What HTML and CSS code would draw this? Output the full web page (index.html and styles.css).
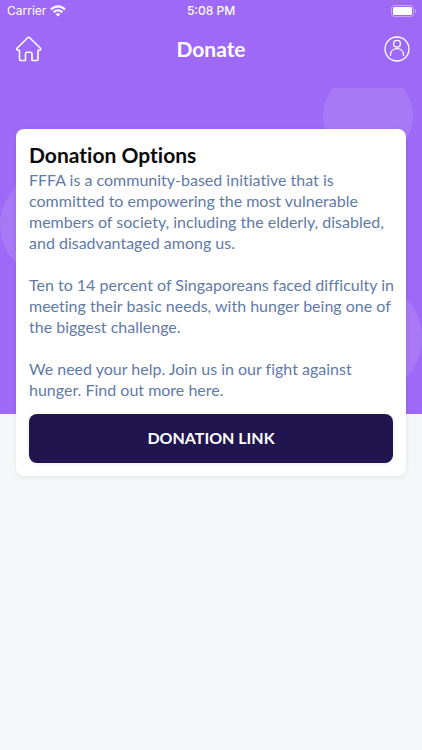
FILE: index.html
```html
<!DOCTYPE html>
<html lang="en">
<head>
<meta charset="utf-8">
<meta name="viewport" content="width=device-width, initial-scale=1">
<title>Donate</title>
<link rel="stylesheet" href="styles.css">
</head>
<body>
<header class="header">
  <div class="status">
    <div class="carrier">
      <span>Carrier</span>
      <svg width="16" height="12" viewBox="0 0 16 12" fill="none" stroke="#fff" stroke-width="2.2" aria-hidden="true">
        <path d="M1 4.600C5 .3 11 .3 15 4.600"/>
        <path d="M3.700 7.200c2.500-2.500 6.100-2.500 8.600 0"/>
        <path d="M8 11.500 5.700 9.200c1.300-1.200 3.300-1.200 4.600 0z" fill="#fff" stroke="none"/>
      </svg>
    </div>
    <span class="time">5:08 PM</span>
    <svg class="battery" width="25" height="12" viewBox="0 0 25 12" aria-hidden="true">
      <rect x=".5" y=".5" width="22" height="11" rx="3" fill="none" stroke="#fff" stroke-opacity=".4"/>
      <rect x="2" y="2" width="19" height="8" rx="1.5" fill="#fff"/>
      <path d="M24 4v4c1.200-.6 1.200-3.400 0-4z" fill="#fff" fill-opacity=".6"/>
    </svg>
  </div>
  <nav class="nav">
    <a class="icon" href="#home" aria-label="Home">
      <svg width="26" height="26" viewBox="0 0 26 26" fill="none" stroke="#fff" stroke-width="1.600" stroke-linejoin="round" aria-hidden="true">
        <path d="M3.500 14.300v9q0 1.200 1.200 1.200h4.800v-6.300q0-2 2-2h2.500q2 0 2 2v6.300h4.800q1.200 0 1.200-1.200v-9h1.500q2-.4.700-2.300L13.700 1.700q-1-.9-2 0L1.300 12q-1.300 1.900.700 2.300z"/>
      </svg>
    </a>
    <h1 class="title">Donate</h1>
    <a class="icon profile" href="#profile" aria-label="Profile">
      <svg width="26" height="26" viewBox="0 0 26 26" fill="none" stroke="#fff" stroke-width="1.300" stroke-linecap="round" aria-hidden="true">
        <circle cx="13" cy="13" r="12"/>
        <circle cx="13" cy="7.700" r="3.400"/>
        <path d="M6.500 19.500v-.700c0-8.200 13-8.200 13 0v.700"/>
      </svg>
    </a>
  </nav>
</header>
<main class="main">
  <div class="backdrop" aria-hidden="true">
    <span class="bubble bubble-top"></span>
    <span class="bubble bubble-left"></span>
    <span class="bubble bubble-right"></span>
  </div>
  <section class="card">
    <h2 class="heading">Donation Options</h2>
    <div class="copy">
      <p>FFFA is a community-based initiative that is committed to empowering the most vulnerable members of society, including the elderly, disabled, and disadvantaged among us.</p>
      <p>Ten to 14 percent of Singaporeans faced difficulty in meeting their basic needs, with hunger being one of the biggest challenge.</p>
      <p>We need your help. Join us in our fight against hunger. Find out more here.</p>
    </div>
    <button class="donate" type="button">DONATION LINK</button>
  </section>
</main>
</body>
</html>
```
FILE: styles.css
```css
* {
  box-sizing: border-box;
}

body {
  margin: 0;
  background: #f5f6f8;
  font-family: Lato, "Liberation Sans", sans-serif;
  font-variant-ligatures: none;
}

.header {
  height: 88px;
  background: #9e69f6;
  color: #fff;
}

.status,
.nav {
  display: grid;
  grid-template-columns: 1fr auto 1fr;
  align-items: center;
}

.status {
  height: 22px;
  padding: 0 6px;
  font: 12px/22px Inter, sans-serif;
}

.carrier {
  display: flex;
  align-items: center;
  gap: 4px;
  padding-left: 1px;
}

.time {
  font-weight: 500;
}

.battery {
  justify-self: end;
}

.nav {
  height: 54px;
  padding: 0 12px;
}

.icon {
  display: flex;
  padding-left: 4px;
}

.profile {
  justify-self: end;
}

.title {
  margin: 0;
  font-size: 21px;
  line-height: 26px;
}

.main {
  position: relative;
  padding: 41px 16px 24px;
}

.backdrop {
  position: absolute;
  top: 0;
  left: 0;
  right: 0;
  height: 326px;
  overflow: hidden;
  background: #9e69f6;
}

.bubble {
  position: absolute;
  border-radius: 50%;
  background: #a878f7;
}

.bubble-top {
  top: -17px;
  right: 9px;
  width: 90px;
  height: 90px;
}

.bubble-left {
  top: 85px;
  left: 0;
  width: 104px;
  height: 104px;
}

.bubble-right {
  top: 192px;
  right: 0;
  width: 116px;
  height: 116px;
}

.card {
  position: relative;
  padding: 12px 13px 13px;
  border-radius: 8px;
  background: #fff;
  box-shadow: 0 1px 4px rgba(0, 0, 0, 0.08);
}

.heading {
  margin: 0;
  color: #0b0b0b;
  font-size: 21px;
  line-height: 28px;
}

.copy {
  display: grid;
  gap: 21px;
  margin: 0 -8px 14px 0;
  color: #5f7aa8;
  font-size: 16px;
  line-height: 21px;
}

.copy p {
  margin: 0;
}

.donate {
  display: block;
  width: 100%;
  height: 49px;
  padding: 0 0 2px;
  border: 0;
  border-radius: 8px;
  background: #21154f;
  color: #fff;
  font: 700 16px/20px Lato, sans-serif;
  box-shadow: 0 1px 4px rgba(0, 0, 0, 0.08);
}
```
